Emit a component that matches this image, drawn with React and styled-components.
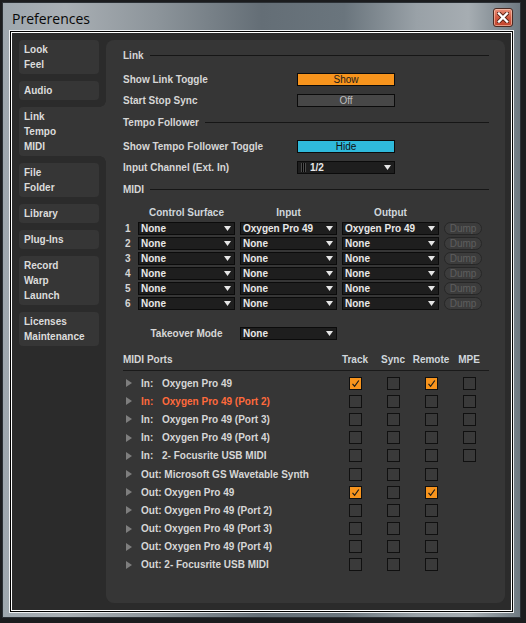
import styled, { createGlobalStyle } from "styled-components"

const GlobalStyle = createGlobalStyle`
  html, body {
    margin: 0;
    padding: 0;
    background: #1b1c1e;
  }
  body {
    width: 526px;
    height: 623px;
    overflow: hidden;
    font-family: "Liberation Sans", Arial, sans-serif;
  }
`

const Screen = styled.div`
  width: 526px;
  height: 623px;
  padding: 3px 0 0 3px;
  box-sizing: border-box;
`

const Window = styled.div`
  width: 517px;
  height: 614px;
  box-sizing: border-box;
  display: flex;
  flex-direction: column;
  padding: 0 6px 4px 6px;
  background: linear-gradient(
    90deg,
    #9ea7ae 0%,
    #a9afb4 12%,
    #8c949a 30%,
    #646e76 50%,
    #6a757d 66%,
    #99a1a7 80%,
    #a6adb2 90%,
    #6f7a82 100%
  );
  box-shadow: 0 0 0 1px #2b3035;
`

const TitleBar = styled.div`
  height: 27px;
  flex: none;
  display: flex;
  justify-content: space-between;
  align-items: flex-start;
`

const Title = styled.div`
  font-family: "Open Sans", "Noto Sans", sans-serif;
  font-size: 14px;
  line-height: 19px;
  color: #080808;
  padding: 6px 0 0 3px;
`

const Close = styled.div`
  width: 20px;
  height: 19px;
  margin: 5px 1px 0 0;
  box-sizing: border-box;
  border: 1px solid #4a2a22;
  border-radius: 3px;
  box-shadow: inset 0 0 0 1px rgba(255, 220, 200, 0.55);
  background: linear-gradient(180deg, #e9907a 0%, #d35a42 50%, #c2432c 100%);
  display: flex;
  align-items: center;
  justify-content: center;
`

const Bezel = styled.div`
  flex: 1;
  display: flex;
  border: 1px solid #eef0f2;
`

const ContentBox = styled.div`
  flex: 1;
  display: flex;
  border: 1px solid #000;
  box-shadow: inset 0 0 0 1px #fff;
  background: #2b2b2b;
  padding: 8px 7px 8px 8px;
`

const Sidebar = styled.div`
  width: 87px;
  flex: none;
  display: flex;
  flex-direction: column;
  align-items: flex-start;
  gap: 7px;
`

const Tab = styled.div`
  position: relative;
  width: ${(p) => (p.$active ? "87px" : "80px")};
  box-sizing: border-box;
  padding: 2px 0 2px 5px;
  background: #363636;
  border-radius: ${(p) => (p.$active ? "4px 0 0 4px" : "4px")};
  font-weight: 700;
  font-size: 10px;
  line-height: 15px;
  color: #dcdcdc;

  ${(p) =>
    p.$active &&
    `
    &::before, &::after {
      content: "";
      position: absolute;
      right: 0;
      width: 6px;
      height: 6px;
    }
    &::before {
      top: -6px;
      background: radial-gradient(circle at 0 0, transparent 5.5px, #363636 6px);
    }
    &::after {
      bottom: -6px;
      background: radial-gradient(circle at 0 100%, transparent 5.5px, #363636 6px);
    }
  `}
`

const Panel = styled.div`
  flex: 1;
  background: #363636;
  border-radius: 8px;
  padding: 7px 16px 0 17px;
  color: #d6d6d6;
  font-weight: 700;
  font-size: 10px;
`

const SectionHeader = styled.div`
  height: 16px;
  display: flex;
  align-items: center;
  margin-top: ${(p) => p.$top || 0}px;
`

const Rule = styled.div`
  flex: 1;
  height: 1px;
  background: #161616;
  margin-left: 6px;
`

const SettingRow = styled.div`
  height: 21px;
  display: flex;
  align-items: center;
  margin-top: ${(p) => p.$top || 0}px;
`

const SettingLabel = styled.div`
  width: 174px;
  flex: none;
`

const Toggle = styled.div`
  width: 98px;
  height: 13px;
  box-sizing: border-box;
  border: 1px solid #0b0b0b;
  background: ${(p) => p.$bg};
  color: ${(p) => p.$fg};
  font-weight: 400;
  font-size: 10px;
  line-height: 11px;
  text-align: center;
`

const Select = styled.div`
  width: ${(p) => p.$w || 97}px;
  height: 13px;
  box-sizing: border-box;
  border: 1px solid #0b0b0b;
  background: #1e1e1e;
  color: #e8e8e8;
  display: flex;
  align-items: center;
  padding: 0 3px 0 2px;
  line-height: 11px;
`

const SelectText = styled.span`
  flex: 1;
  white-space: nowrap;
  overflow: hidden;
`

const ChannelBars = styled.span`
  width: 5px;
  height: 9px;
  margin: 0 4px 0 1px;
  background: linear-gradient(
    90deg,
    #4c4c4c 0 1px,
    #050505 1px 2px,
    #4c4c4c 2px 3px,
    #050505 3px 4px,
    #4c4c4c 4px 5px
  );
`

const MidiGrid = styled.div`
  display: grid;
  grid-template-columns: 10px repeat(3, 97px) 38px;
  column-gap: 5px;
  grid-auto-rows: ${(p) => p.$row || 15}px;
  align-items: center;
  margin-top: ${(p) => p.$top || 0}px;
`

const ColHead = styled.div`
  text-align: center;
  color: #d0d6dc;
`

const RowNum = styled.div`
  padding-left: 2px;
`

const Dump = styled.div`
  height: 13px;
  box-sizing: border-box;
  border: 1px solid #272727;
  border-radius: 7px;
  background: #3c3c3c;
  color: #5e5e5e;
  font-weight: 400;
  font-size: 10px;
  line-height: 11px;
  text-align: center;
`

const TakeoverLabel = styled.div`
  grid-column: 2;
  text-align: center;
`

const PortsHead = styled.div`
  display: grid;
  grid-template-columns: 1fr repeat(4, 38px);
  padding-right: 1px;
  height: 20px;
  box-sizing: border-box;
  padding-bottom: 3px;
  border-bottom: 1px solid #1a1a1a;
  align-items: center;
  margin-top: 10px;
`

const PortsHeadCell = styled.div`
  text-align: center;
  color: #d0d6dc;
`

const PortList = styled.div`
  margin-top: 3px;
`

const PortRow = styled.div`
  display: grid;
  grid-template-columns: 18px 1fr repeat(4, 38px);
  padding-right: 1px;
  height: 18.2px;
  align-items: center;
  color: ${(p) => (p.$hot ? "#ff6a3c" : "#d6d6d6")};
`

const Arrow = styled.svg`
  margin-left: 3px;
  display: block;
`

const PortName = styled.div`
  display: flex;
  white-space: nowrap;
`

const Dir = styled.span`
  width: 21px;
  flex: none;
`

const Box = styled.div`
  justify-self: center;
  width: 13px;
  height: 13px;
  box-sizing: border-box;
  border: 1px solid #101010;
  background: ${(p) => (p.$on ? "#f7941d" : "#3a3a3a")};
  display: flex;
  align-items: center;
  justify-content: center;
`

const DownArrow = () => (
  <svg width="7" height="5" viewBox="0 0 7 5">
    <polygon points="0,0 7,0 3.5,5" fill="#e6e6e6" />
  </svg>
)

const Dropdown = ({ value, w, bars }) => (
  <Select $w={w}>
    {bars && <ChannelBars />}
    <SelectText>{value}</SelectText>
    <DownArrow />
  </Select>
)

const Check = ({ on }) => (
  <Box $on={on}>
    {on && (
      <svg width="9" height="9" viewBox="0 0 9 9">
        <path d="M1.5 4.8 L3.6 7.3 L7.8 1.5" fill="none" stroke="#1a1a1a" strokeWidth="1.2" />
      </svg>
    )}
  </Box>
)

const tabs = [
  ["Look", "Feel"],
  ["Audio"],
  ["Link", "Tempo", "MIDI"],
  ["File", "Folder"],
  ["Library"],
  ["Plug-Ins"],
  ["Record", "Warp", "Launch"],
  ["Licenses", "Maintenance"],
]

const surfaces = [
  ["None", "Oxygen Pro 49", "Oxygen Pro 49"],
  ["None", "None", "None"],
  ["None", "None", "None"],
  ["None", "None", "None"],
  ["None", "None", "None"],
  ["None", "None", "None"],
]

const ports = [
  { dir: "In:", name: "Oxygen Pro 49", boxes: [true, false, true, false] },
  { dir: "In:", name: "Oxygen Pro 49 (Port 2)", boxes: [false, false, false, false], hot: true },
  { dir: "In:", name: "Oxygen Pro 49 (Port 3)", boxes: [false, false, false, false] },
  { dir: "In:", name: "Oxygen Pro 49 (Port 4)", boxes: [false, false, false, false] },
  { dir: "In:", name: "2- Focusrite USB MIDI", boxes: [false, false, false, false] },
  { dir: "Out:", name: "Microsoft GS Wavetable Synth", boxes: [false, false, false] },
  { dir: "Out:", name: "Oxygen Pro 49", boxes: [true, false, true] },
  { dir: "Out:", name: "Oxygen Pro 49 (Port 2)", boxes: [false, false, false] },
  { dir: "Out:", name: "Oxygen Pro 49 (Port 3)", boxes: [false, false, false] },
  { dir: "Out:", name: "Oxygen Pro 49 (Port 4)", boxes: [false, false, false] },
  { dir: "Out:", name: "2- Focusrite USB MIDI", boxes: [false, false, false] },
]

const App = () => {
  return (
    <Screen>
      <GlobalStyle />
      <Window>
        <TitleBar>
          <Title>Preferences</Title>
          <Close>
            <svg width="12" height="11" viewBox="0 0 12 11">
              <path d="M2 1.5 L10 9.5 M10 1.5 L2 9.5" stroke="#5a2418" strokeWidth="4.2" strokeLinecap="square" />
              <path d="M2 1.5 L10 9.5 M10 1.5 L2 9.5" stroke="#fff" strokeWidth="2.4" strokeLinecap="square" />
            </svg>
          </Close>
        </TitleBar>
        <Bezel>
          <ContentBox>
            <Sidebar>
              {tabs.map((lines, i) => (
                <Tab key={i} $active={i === 2}>
                  {lines.map((l) => (
                    <div key={l}>{l}</div>
                  ))}
                </Tab>
              ))}
            </Sidebar>
            <Panel>
              <SectionHeader>
                Link
                <Rule />
              </SectionHeader>
              <SettingRow $top={6}>
                <SettingLabel>Show Link Toggle</SettingLabel>
                <Toggle $bg="#f7941d" $fg="#1a1a1a">Show</Toggle>
              </SettingRow>
              <SettingRow>
                <SettingLabel>Start Stop Sync</SettingLabel>
                <Toggle $bg="#474747" $fg="#bdbdbd">Off</Toggle>
              </SettingRow>

              <SectionHeader $top={3}>
                Tempo Follower
                <Rule />
              </SectionHeader>
              <SettingRow $top={6}>
                <SettingLabel>Show Tempo Follower Toggle</SettingLabel>
                <Toggle $bg="#2fbadb" $fg="#101010">Hide</Toggle>
              </SettingRow>
              <SettingRow>
                <SettingLabel>Input Channel (Ext. In)</SettingLabel>
                <Dropdown value="1/2" w={98} bars />
              </SettingRow>

              <SectionHeader $top={3}>
                MIDI
                <Rule />
              </SectionHeader>
              <MidiGrid $top={8} $row={14}>
                <div />
                <ColHead>Control Surface</ColHead>
                <ColHead>Input</ColHead>
                <ColHead>Output</ColHead>
                <div />
              </MidiGrid>
              <MidiGrid $top={2}>
                {surfaces.map((row, i) => [
                  <RowNum key={`n${i}`}>{i + 1}</RowNum>,
                  ...row.map((v, j) => <Dropdown key={`d${i}${j}`} value={v} />),
                  <Dump key={`b${i}`}>Dump</Dump>,
                ])}
              </MidiGrid>
              <MidiGrid $top={15}>
                <TakeoverLabel>Takeover Mode</TakeoverLabel>
                <Dropdown value="None" />
              </MidiGrid>

              <PortsHead>
                <div>MIDI Ports</div>
                <PortsHeadCell>Track</PortsHeadCell>
                <PortsHeadCell>Sync</PortsHeadCell>
                <PortsHeadCell>Remote</PortsHeadCell>
                <PortsHeadCell>MPE</PortsHeadCell>
              </PortsHead>
              <PortList>
                {ports.map((p, i) => (
                  <PortRow key={i} $hot={p.hot}>
                    <Arrow width="6" height="8" viewBox="0 0 6 8">
                      <polygon points="0,0 6,4 0,8" fill="#7e7e7e" />
                    </Arrow>
                    <PortName>
                      {p.dir === "In:" ? (
                        <>
                          <Dir>{p.dir}</Dir>
                          {p.name}
                        </>
                      ) : (
                        `${p.dir} ${p.name}`
                      )}
                    </PortName>
                    {p.boxes.map((on, j) => (
                      <Check key={j} on={on} />
                    ))}
                  </PortRow>
                ))}
              </PortList>
            </Panel>
          </ContentBox>
        </Bezel>
      </Window>
    </Screen>
  )
}

export default App
